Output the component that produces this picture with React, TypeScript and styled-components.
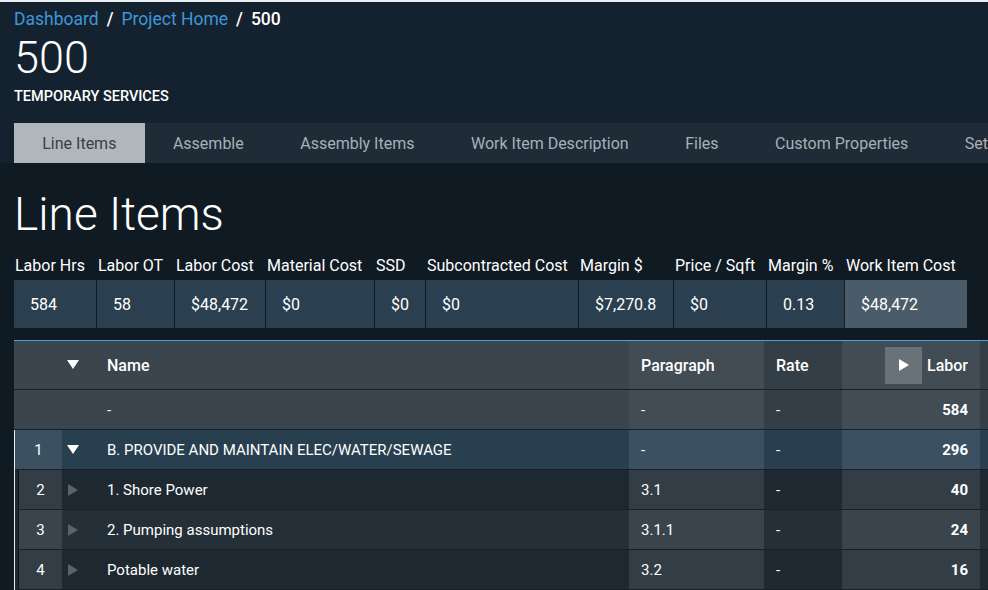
import * as React from 'react';
import styled, {createGlobalStyle} from "styled-components";

const GlobalStyle = createGlobalStyle`
    html, body {
        margin: 0;
        padding: 0;
        background: #101a23;
    }
    body {
        font-family: Roboto, "Liberation Sans", sans-serif;
        color: #ffffff;
    }
`;

type Tone = 'base' | 'light' | 'dark';
type Variant = 'head' | 'group' | 'odd' | 'even';

const palette: Record<Variant, Record<Tone, string>> = {
    head: {base: '#3a454e', light: '#414c55', dark: '#343e46'},
    group: {base: '#283f50', light: '#3b5161', dark: '#293f50'},
    odd: {base: '#1e2830', light: '#323d46', dark: '#1f2931'},
    even: {base: '#252f38', light: '#39444d', dark: '#262f37'},
};

const tabs = ['Line Items', 'Assemble', 'Assembly Items', 'Work Item Description', 'Files', 'Custom Properties', 'Settings'];

const stats = [
    {label: 'Labor Hrs', value: '584', width: 82},
    {label: 'Labor OT', value: '58', width: 77},
    {label: 'Labor Cost', value: '$48,472', width: 90},
    {label: 'Material Cost', value: '$0', width: 108},
    {label: 'SSD', value: '$0', width: 50},
    {label: 'Subcontracted Cost', value: '$0', width: 152},
    {label: 'Margin $', value: '$7,270.8', width: 94},
    {label: 'Price / Sqft', value: '$0', width: 92},
    {label: 'Margin %', value: '0.13', width: 77},
    {label: 'Work Item Cost', value: '$48,472', width: 122, highlight: true},
];

const children = [
    {index: '2', name: '1. Shore Power', paragraph: '3.1', rate: '-', labor: '40'},
    {index: '3', name: '2. Pumping assumptions', paragraph: '3.1.1', rate: '-', labor: '24'},
    {index: '4', name: 'Potable water', paragraph: '3.2', rate: '-', labor: '16'},
];

// first column shrinks as rows get indented, so the rest stays aligned
const cols = (first: number) => `${first}px 33px 534px 135px 78px 138px 120px`;

const TriangleDown = () => (
    <svg width="12" height="10" viewBox="0 0 12 10"><polygon points="0,0 12,0 6,9" fill="#ffffff"/></svg>
);

const TriangleRight = ({color}: {color: string}) => (
    <svg width="10" height="12" viewBox="0 0 10 12"><polygon points="0,0 10,6 0,12" fill={color}/></svg>
);

interface RowData {
    index: string;
    name: string;
    paragraph: string;
    rate: string;
    labor: string;
}

const DataRow: React.FC<{ data: RowData; variant: Variant; first: number; expanded?: boolean }> = ({data, variant, first, expanded}) => {
    const c = palette[variant];
    return (
        <Row $cols={cols(first)}>
            <Cell $bg={variant === 'head' ? c.base : c.light} $align="center">{data.index}</Cell>
            <ArrowCell $bg={c.base} $shift={expanded ? 5 : 6}>
                {variant === 'head' ? null : expanded ? <TriangleDown/> : <TriangleRight color="#59636b"/>}
            </ArrowCell>
            <Cell $bg={c.base}>{data.name}</Cell>
            <Cell $bg={c.light}>{data.paragraph}</Cell>
            <Cell $bg={c.dark}>{data.rate}</Cell>
            <Cell $bg={c.light} $align="right" $bold>{data.labor}</Cell>
            <Cell $bg={c.dark}/>
        </Row>
    );
};

const App: React.FC = () => {
    const head = palette.head;
    return (
        <Page>
            <GlobalStyle/>
            <Header>
                <Breadcrumb>
                    <Crumb href="#">Dashboard</Crumb>
                    <Slash>/</Slash>
                    <Crumb href="#">Project Home</Crumb>
                    <Slash>/</Slash>
                    <Current>500</Current>
                </Breadcrumb>
                <Title>500</Title>
                <Subtitle>Temporary Services</Subtitle>
                <TabBar>
                    {tabs.map((t, i) => <Tab key={t} $active={i === 0}>{t}</Tab>)}
                </TabBar>
            </Header>
            <Content>
                <Heading>Line Items</Heading>
                <Summary>
                    {stats.map(s => (
                        <Stat key={s.label} $w={s.width}>
                            <StatLabel>{s.label}</StatLabel>
                            <StatValue $highlight={!!s.highlight}>{s.value}</StatValue>
                        </Stat>
                    ))}
                </Summary>
                <Table>
                    <HeadRow $cols={cols(48)}>
                        <Cell $bg={head.base}/>
                        <ArrowCell $bg={head.base} $shift={5}><TriangleDown/></ArrowCell>
                        <HeadCell $bg={head.base}>Name</HeadCell>
                        <HeadCell $bg={head.light}>Paragraph</HeadCell>
                        <HeadCell $bg={head.dark}>Rate</HeadCell>
                        <HeadCell $bg={head.light} $align="right">
                            <Toggle><TriangleRight color="#ffffff"/></Toggle>
                            Labor
                        </HeadCell>
                        <Cell $bg={head.dark}/>
                    </HeadRow>
                    <DataRow data={{index: '', name: '-', paragraph: '-', rate: '-', labor: '584'}} variant="head" first={48}/>
                    <Group>
                        <DataRow
                            data={{index: '1', name: 'B. PROVIDE AND MAINTAIN ELEC/WATER/SEWAGE', paragraph: '-', rate: '-', labor: '296'}}
                            variant="group" first={47} expanded/>
                        <ChildList>
                            {children.map((r, i) => (
                                <DataRow key={r.index} data={r} variant={i % 2 === 0 ? 'odd' : 'even'} first={43}/>
                            ))}
                        </ChildList>
                    </Group>
                </Table>
            </Content>
        </Page>
    );
};

export default App;

const Page = styled.div`
    width: 988px;
    height: 590px;
    overflow: hidden;
    background: #101a23;
`;

const Header = styled.header`
    background: #14222f;
    border-top: 2px solid #eceff1;
    padding: 6px 0 0 14px;
`;

const Breadcrumb = styled.nav`
    font-size: 17.5px;
    line-height: 22px;
    display: flex;
    align-items: center;
`;

const Crumb = styled.a`
    color: #3d97d9;
    text-decoration: none;
`;

const Slash = styled.span`
    color: #ffffff;
    font-weight: 500;
    margin: 0 8px;
`;

const Current = styled.span`
    color: #ffffff;
    font-weight: 500;
`;

const Title = styled.h1`
    margin: 3px 0 0;
    font-size: 45px;
    line-height: 50px;
    font-weight: 300;
`;

const Subtitle = styled.div`
    margin-top: 6px;
    font-size: 14.5px;
    line-height: 16px;
    font-weight: 500;
    text-transform: uppercase;
`;

const TabBar = styled.div`
    margin-top: 18px;
    height: 40px;
    display: flex;
    background: #1f2b36;
    white-space: nowrap;
    overflow: hidden;
`;

const Tab = styled.div<{ $active: boolean }>`
    display: flex;
    align-items: center;
    flex-shrink: 0;
    padding: 0 28.25px;
    font-size: 16px;
    color: ${p => p.$active ? '#34404a' : '#a7b0b8'};
    background: ${p => p.$active ? '#b1b6ba' : 'transparent'};
`;

const Content = styled.main`
    padding-left: 14px;
`;

const Heading = styled.h2`
    margin: 26px 0 0;
    font-size: 46px;
    line-height: 50px;
    font-weight: 300;
`;

const Summary = styled.div`
    margin-top: 17px;
    display: flex;
    gap: 1px;
`;

const Stat = styled.div<{ $w: number }>`
    width: ${p => p.$w}px;
    display: flex;
    flex-direction: column;
    gap: 4px;
`;

const StatLabel = styled.div`
    font-size: 16px;
    line-height: 20px;
    padding-left: 1px;
    white-space: nowrap;
`;

const StatValue = styled.div<{ $highlight: boolean }>`
    height: 48px;
    display: flex;
    align-items: center;
    padding-left: 16px;
    font-size: 16px;
    background: ${p => p.$highlight ? '#4a5c6a' : '#2a3f50'};
`;

const Table = styled.div`
    margin-top: 12px;
    border-top: 1px solid #4da0d8;
    width: 1085px;
`;

const Row = styled.div<{ $cols: string }>`
    display: grid;
    grid-template-columns: ${p => p.$cols};
    height: 39px;
    border-bottom: 1px solid #172028;
    font-size: 15px;
`;

const HeadRow = styled(Row)`
    height: 48px;
    font-size: 16px;
`;

const Cell = styled.div<{ $bg: string; $align?: 'left' | 'center' | 'right'; $bold?: boolean }>`
    display: flex;
    align-items: center;
    justify-content: ${p => p.$align === 'center' ? 'center' : p.$align === 'right' ? 'flex-end' : 'flex-start'};
    padding: ${p => p.$align === 'center' ? '0' : '0 12px'};
    background: ${p => p.$bg};
    font-weight: ${p => p.$bold ? 700 : 400};
    white-space: nowrap;
    overflow: hidden;
`;

const ArrowCell = styled(Cell)<{ $shift: number }>`
    padding: 0 0 0 ${p => p.$shift}px;
`;

const HeadCell = styled(Cell)`
    font-weight: 500;
`;

const Toggle = styled.span`
    width: 37px;
    height: 37px;
    margin-right: 5px;
    display: flex;
    align-items: center;
    justify-content: center;
    background: #6a7279;
`;

const Group = styled.div`
    border-left: 1px solid #eceff1;
`;

const ChildList = styled.div`
    background: #1e2830;
    padding-left: 3px;

    & > div {
        border-left: 1px solid #10171d;
    }
`;
